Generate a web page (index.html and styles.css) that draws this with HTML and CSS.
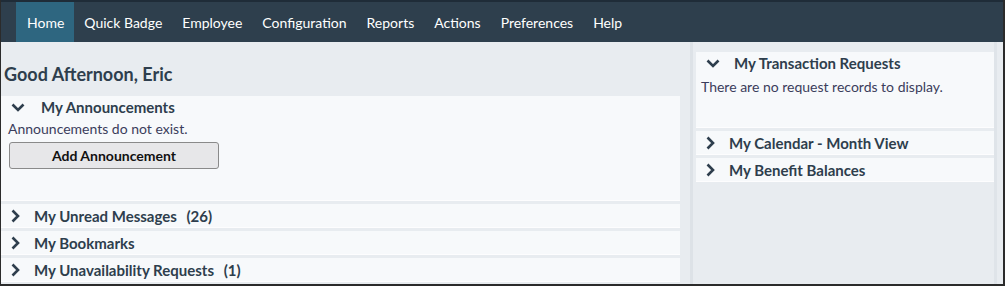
FILE: index.html
```html
<!DOCTYPE html>
<html lang="en">
<head>
    <meta charset="UTF-8">
    <title>Home</title>
    <link rel="stylesheet" href="styles.css">
</head>
<body>
    <div class="page">
        <nav class="topnav">
            <a class="nav-item active">Home</a>
            <a class="nav-item">Quick Badge</a>
            <a class="nav-item">Employee</a>
            <a class="nav-item">Configuration</a>
            <a class="nav-item">Reports</a>
            <a class="nav-item">Actions</a>
            <a class="nav-item">Preferences</a>
            <a class="nav-item">Help</a>
        </nav>
        <div class="main">
            <div class="col-left">
                <h1 class="greeting">Good Afternoon, Eric</h1>
                <div class="panel open announcements">
                    <div class="panel-head">
                        <svg class="chev-down" width="14" height="9" viewBox="0 0 14 9"><path d="M1.5 1.5 L7 7 L12.5 1.5" fill="none" stroke="#2e3e4d" stroke-width="2.6"/></svg>
                        <span class="panel-title">My Announcements</span>
                    </div>
                    <div class="panel-body">
                        <div class="empty">Announcements do not exist.</div>
                        <button class="btn">Add Announcement</button>
                    </div>
                </div>
                <div class="panel">
                    <div class="panel-head">
                        <svg class="chev-right" width="9" height="14" viewBox="0 0 9 14"><path d="M1.5 1.5 L7 7 L1.5 12.5" fill="none" stroke="#2e3e4d" stroke-width="2.6"/></svg>
                        <span class="panel-title">My Unread Messages <span class="count">(26)</span></span>
                    </div>
                </div>
                <div class="panel">
                    <div class="panel-head">
                        <svg class="chev-right" width="9" height="14" viewBox="0 0 9 14"><path d="M1.5 1.5 L7 7 L1.5 12.5" fill="none" stroke="#2e3e4d" stroke-width="2.6"/></svg>
                        <span class="panel-title">My Bookmarks</span>
                    </div>
                </div>
                <div class="panel">
                    <div class="panel-head">
                        <svg class="chev-right" width="9" height="14" viewBox="0 0 9 14"><path d="M1.5 1.5 L7 7 L1.5 12.5" fill="none" stroke="#2e3e4d" stroke-width="2.6"/></svg>
                        <span class="panel-title">My Unavailability Requests <span class="count">(1)</span></span>
                    </div>
                </div>
            </div>
            <div class="col-right">
                <div class="panel open requests">
                    <div class="panel-head">
                        <svg class="chev-down" width="14" height="9" viewBox="0 0 14 9"><path d="M1.5 1.5 L7 7 L12.5 1.5" fill="none" stroke="#2e3e4d" stroke-width="2.6"/></svg>
                        <span class="panel-title">My Transaction Requests</span>
                    </div>
                    <div class="panel-body">
                        <div class="empty">There are no request records to display.</div>
                    </div>
                </div>
                <div class="panel">
                    <div class="panel-head">
                        <svg class="chev-right" width="9" height="14" viewBox="0 0 9 14"><path d="M1.5 1.5 L7 7 L1.5 12.5" fill="none" stroke="#2e3e4d" stroke-width="2.6"/></svg>
                        <span class="panel-title">My Calendar - Month View</span>
                    </div>
                </div>
                <div class="panel">
                    <div class="panel-head">
                        <svg class="chev-right" width="9" height="14" viewBox="0 0 9 14"><path d="M1.5 1.5 L7 7 L1.5 12.5" fill="none" stroke="#2e3e4d" stroke-width="2.6"/></svg>
                        <span class="panel-title">My Benefit Balances</span>
                    </div>
                </div>
            </div>
        </div>
    </div>
</body>
</html>
```

FILE: styles.css
```css
* {
    box-sizing: border-box;
}
body {
    margin: 0;
    padding: 0;
    background: #fff;
    font-family: Lato, 'Open Sans', sans-serif;
}
.page {
    width: 1005px;
    height: 286px;
    border: 1px solid #2b2b2b;
    border-width: 0 2px 2px 1px;
    background: #e8ecf0;
    overflow: hidden;
}
.topnav {
    display: flex;
    height: 42px;
    background: #2e3f4d;
    border-top: 2px solid #1f2c38;
    padding-left: 15px;
}
.nav-item {
    display: flex;
    align-items: center;
    padding: 0 10px;
    color: #fff;
    font-size: 14px;
    cursor: pointer;
}
.nav-item.active {
    background: #2e6680;
    padding: 0 10px 0 11px;
}
.main {
    display: flex;
    height: 242px;
}
.col-left {
    width: 679px;
}
.col-right {
    flex: 1;
    margin-left: 10px;
    border-left: 3px solid #dde2e7;
    border-right: 3px solid #dfe4e9;
    padding: 10px 0 0 3px;
    margin-right: 6px;
}
.greeting {
    margin: 0;
    padding: 21px 0 0 3px;
    height: 54px;
    font-size: 18px;
    line-height: 22px;
    font-weight: bold;
    color: #2e3e4d;
}
.panel {
    background: #f7f9fb;
    border-bottom: 1px solid #fdfdfe;
    margin-bottom: 3px;
}
.panel-head {
    display: flex;
    align-items: center;
    height: 23px;
    padding-left: 10px;
}
.panel-title {
    margin-left: 14px;
    font-size: 15px;
    font-weight: bold;
    color: #2e3e4d;
}
.chev-down + .panel-title {
    margin-left: 16px;
}
.count {
    margin-left: 6px;
}
.open .panel-head {
    height: 22px;
}
.panel-body {
    padding: 1px 7px 0 7px;
}
.empty {
    font-size: 14px;
    line-height: 20px;
    color: #3b3d5c;
}
.announcements {
    height: 105px;
}
.requests {
    height: 76px;
}
.requests .chev-down + .panel-title {
    margin-left: 14px;
}
.requests .panel-body {
    padding: 3px 7px 0 5px;
}
.btn {
    margin-top: 3px;
    margin-left: 1px;
    width: 210px;
    height: 27px;
    background: #e7e7e9;
    border: 1px solid #8a8a8a;
    border-radius: 3px;
    font-family: Lato, sans-serif;
    font-size: 14px;
    font-weight: bold;
    color: #111;
}
```
